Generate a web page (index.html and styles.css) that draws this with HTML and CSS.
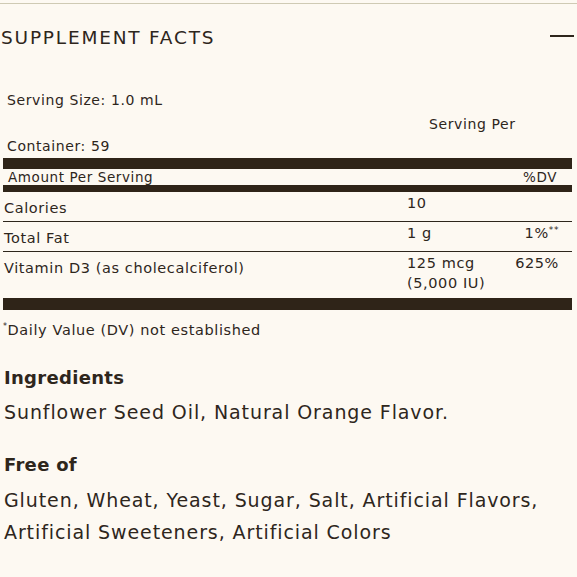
FILE: index.html
```html
<!DOCTYPE html>
<html lang="en">
<head>
<meta charset="utf-8">
<title>Supplement Facts</title>
<link rel="stylesheet" href="styles.css">
</head>
<body>
<section class="accordion">
  <header class="acc-head">
    <h2 class="acc-title">SUPPLEMENT FACTS</h2>
    <span class="acc-minus" aria-hidden="true"></span>
  </header>

  <div class="facts">
    <div class="serving">
      <div class="serving-left">
        <div>Serving Size: 1.0 mL</div>
        <div>Container: 59</div>
      </div>
      <div class="serving-right">Serving Per</div>
    </div>

    <div class="row row-head">
      <div class="c-label small">Amount Per Serving</div>
      <div class="c-amt"></div>
      <div class="c-dv small">%DV</div>
    </div>

    <div class="row">
      <div class="c-label">Calories</div>
      <div class="c-amt">10</div>
      <div class="c-dv"></div>
    </div>
    <div class="row">
      <div class="c-label">Total Fat</div>
      <div class="c-amt">1 g</div>
      <div class="c-dv">1%<sup>**</sup></div>
    </div>
    <div class="row row-last">
      <div class="c-label">Vitamin D3 (as cholecalciferol)</div>
      <div class="c-amt">125 mcg<br>(5,000 IU)</div>
      <div class="c-dv">625%</div>
    </div>
  </div>

  <p class="footnote"><sup>*</sup>Daily Value (DV) not established</p>

  <h3 class="sub">Ingredients</h3>
  <p class="body">Sunflower Seed Oil, Natural Orange Flavor.</p>

  <h3 class="sub sub-free">Free of</h3>
  <p class="body body-free">Gluten, Wheat, Yeast, Sugar, Salt, Artificial Flavors, Artificial Sweeteners, Artificial Colors</p>
</section>
</body>
</html>
```

FILE: styles.css
```css
* { box-sizing: border-box; }

html, body {
  margin: 0;
  padding: 0;
  background: #fdf9f2;
}

body {
  font-family: "DejaVu Sans", "Liberation Sans", sans-serif;
  color: #2e261c;
  padding-top: 3px;
}

.accordion {
  border-top: 1px solid #cfcab4;
}

.acc-head {
  display: flex;
  align-items: center;
  justify-content: space-between;
  padding: 18px 3px 0 1px;
  height: 50px;
}

.acc-title {
  margin: 0;
  font-size: 18.5px;
  font-weight: 400;
  letter-spacing: 1.8px;
  line-height: 24px;
}

.acc-minus {
  width: 24px;
  height: 2px;
  background: #2e261c;
  margin: 0 0 4px;
}

.facts {
  margin: 34px 5px 0 3px;
  font-size: 14.5px;
  letter-spacing: 0.6px;
}

.serving {
  display: grid;
  grid-template-columns: 422px 1fr;
  height: 70px;
  padding-left: 4px;
  font-size: 14px;
}

.serving-left {
  display: flex;
  flex-direction: column;
  justify-content: space-between;
  padding: 3px 0 3px;
  line-height: 18px;
}

.serving-right {
  align-self: center;
  line-height: 18px;
  padding-top: 2px;
}

.row {
  display: grid;
  grid-template-columns: 404px 1fr 80px;
  border-bottom: 1px solid #2e261c;
}

.row-head {
  border-top: 11px solid #2f2418;
  border-bottom: 7px solid #2f2418;
  height: 34px;
}

.row-head .c-label,
.row-head .c-dv {
  padding-top: 0;
  padding-bottom: 0;
  line-height: 16px;
}

.row-head .c-label { padding-left: 5px; }
.row-head .c-dv { padding-right: 15px; }

.small { font-size: 13.5px; }

.c-label {
  padding: 8px 0 4px 1px;
  line-height: 17px;
}

.c-amt {
  padding: 1px 0 5px;
  line-height: 20px;
}

.c-dv {
  padding: 1px 13px 5px 0;
  line-height: 20px;
  text-align: right;
}

.c-dv sup {
  font-size: 9px;
  vertical-align: 5px;
  line-height: 0;
}

.row-last {
  border-bottom: 12px solid #2f2418;
}

.footnote {
  margin: 11px 0 0 3px;
  font-size: 14.5px;
  letter-spacing: 0.6px;
  line-height: 18px;
}

.footnote sup {
  font-size: 8px;
  vertical-align: 6px;
  line-height: 0;
}

.sub {
  margin: 27px 0 0 4px;
  font-size: 18px;
  font-weight: 700;
  letter-spacing: 0.3px;
  line-height: 24px;
}

.body {
  margin: 6px 0 0 4px;
  font-size: 19px;
  letter-spacing: 0.9px;
  line-height: 32px;
}

.sub-free { margin-top: 25px; }
.body-free { margin-top: 7px; }
```
